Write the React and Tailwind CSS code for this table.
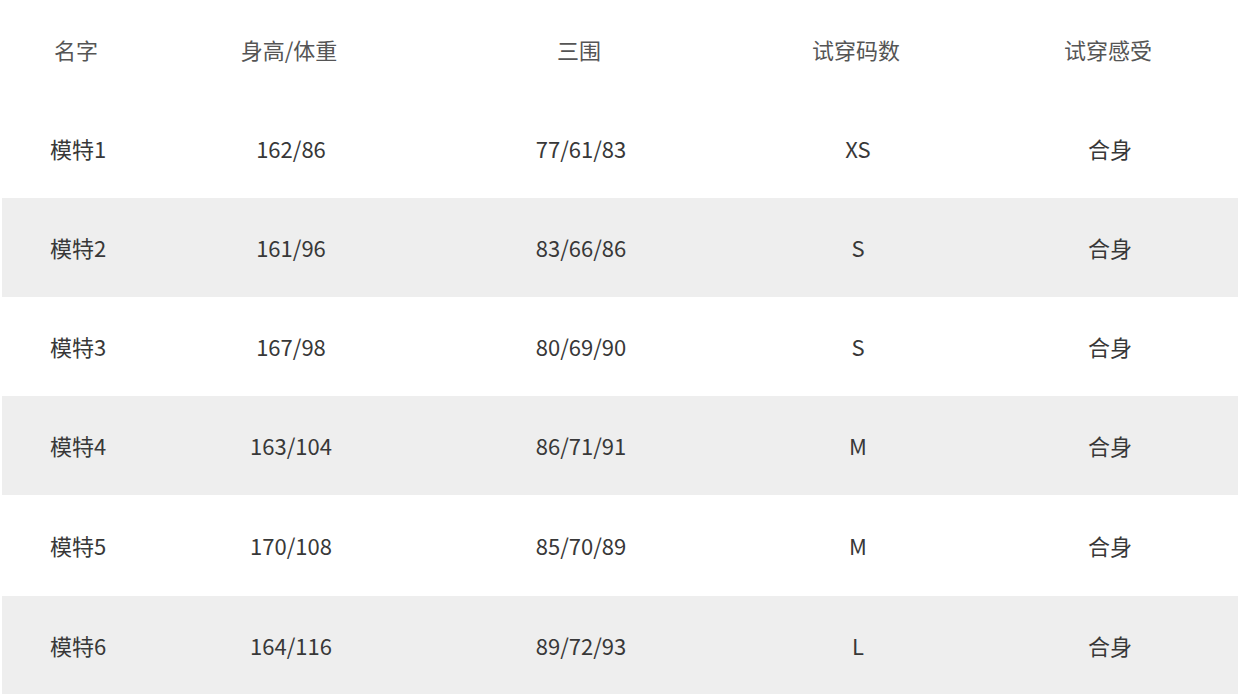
import React from 'react';

const cols = [
  { key: 'name', label: '名字', w: 'w-[152px]' },
  { key: 'hw', label: '身高/体重', w: 'w-[274px]' },
  { key: 'bwh', label: '三围', w: 'w-[306px]' },
  { key: 'size', label: '试穿码数', w: 'w-[248px]' },
  { key: 'feel', label: '试穿感受', w: 'w-[256px]' },
];

const rows = [
  { name: '模特1', hw: '162/86', bwh: '77/61/83', size: 'XS', feel: '合身' },
  { name: '模特2', hw: '161/96', bwh: '83/66/86', size: 'S', feel: '合身' },
  { name: '模特3', hw: '167/98', bwh: '80/69/90', size: 'S', feel: '合身' },
  { name: '模特4', hw: '163/104', bwh: '86/71/91', size: 'M', feel: '合身' },
  { name: '模特5', hw: '170/108', bwh: '85/70/89', size: 'M', feel: '合身' },
  { name: '模特6', hw: '164/116', bwh: '89/72/93', size: 'L', feel: '合身' },
];

const App = () => {
  return (
    <div
      className="w-[1240px] h-[694px] bg-white px-[2px] overflow-hidden"
      style={{ fontFamily: '"Noto Sans CJK SC", "Noto Sans", sans-serif' }}
    >
      <div className="flex h-[99px] items-center text-[22px] text-[#555555]">
        {cols.map((c) => (
          <div key={c.key} className={`${c.w} text-center pr-[4px]`}>
            {c.label}
          </div>
        ))}
      </div>
      {rows.map((r, i) => (
        <div
          key={r.name}
          className={`flex items-center text-[22px] text-[#383838] ${
            i % 2 === 1 ? 'bg-[#eeeeee]' : 'bg-white'
          } ${i === 4 ? 'h-[101px]' : 'h-[99px]'}`}
        >
          {cols.map((c) => (
            <div key={c.key} className={`${c.w} text-center`}>
              {r[c.key]}
            </div>
          ))}
        </div>
      ))}
    </div>
  );
};

export default App;
